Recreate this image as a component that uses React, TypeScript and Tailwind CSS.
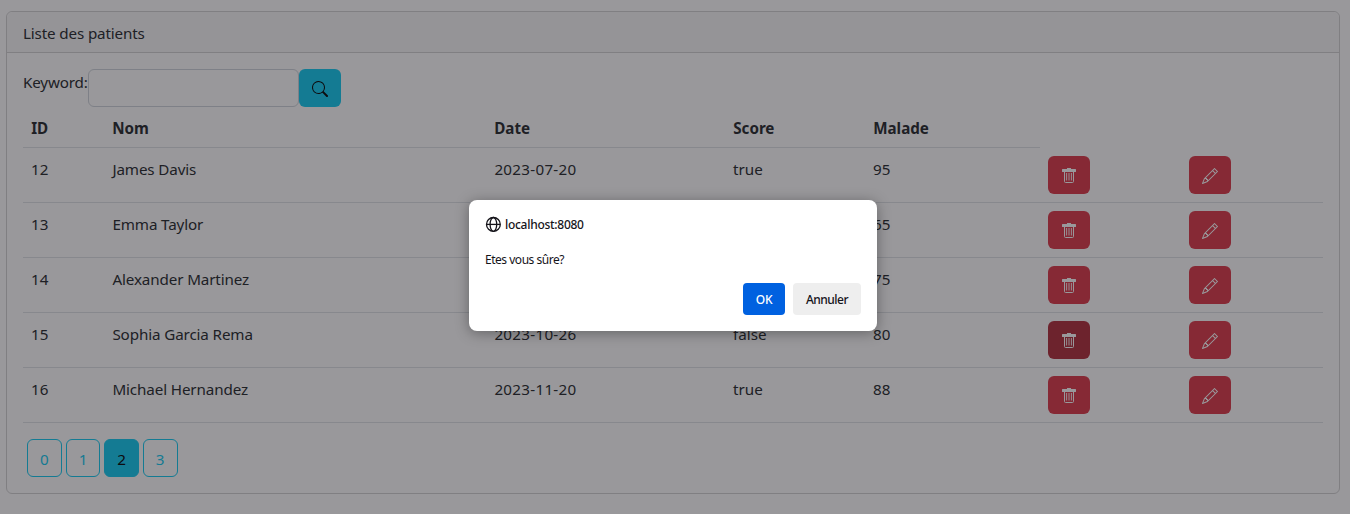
import { BsSearch, BsPencil } from "react-icons/bs";

type Patient = { id: number; nom: string; date: string; malade: string; score: number; pressed?: boolean };

const patients: Patient[] = [
  { id: 12, nom: "James Davis", date: "2023-07-20", malade: "true", score: 95 },
  { id: 13, nom: "Emma Taylor", date: "", malade: "", score: 65 },
  { id: 14, nom: "Alexander Martinez", date: "", malade: "", score: 75 },
  { id: 15, nom: "Sophia Garcia Rema", date: "2023-10-26", malade: "false", score: 80, pressed: true },
  { id: 16, nom: "Michael Hernandez", date: "2023-11-20", malade: "true", score: 88 },
];

const columns = "grid grid-cols-[81px_382px_239px_140px_175px_141px_142px]";

function TrashIcon() {
  return (
    <svg width="16" height="16" viewBox="0 0 16 16" fill="none" stroke="currentColor">
      <path d="M6 1h4v1h4.4a.6.6 0 0 1 .6.6V4.4a.6.6 0 0 1-.6.6H1.6a.6.6 0 0 1-.6-.6V2.6a.6.6 0 0 1 .6-.6H6z" fill="currentColor" stroke="none" />
      <path d="M3.5 5v9.5a1 1 0 0 0 1 1h7a1 1 0 0 0 1-1V5" />
      <path d="M5.6 6v7.5M8 6v7.5M10.4 6v7.5" strokeWidth="0.9" />
    </svg>
  );
}

function GlobeIcon() {
  return (
    <svg width="16" height="16" viewBox="0 0 16 16" fill="none" stroke="currentColor" strokeWidth="1.3">
      <circle cx="8.4" cy="8.4" r="6.9" />
      <ellipse cx="8.4" cy="8.4" rx="3.3" ry="6.9" />
      <path d="M1.6 8.4h13.6" />
    </svg>
  );
}

export default function App() {
  return (
    <div className="relative h-[514px] w-full overflow-hidden bg-white px-1.5 pt-[11px] font-['Noto_Sans',sans-serif] text-[15.2px] leading-6 text-[#212529]">
      <main className="mr-1 h-[483px] rounded-md border border-[#d2d2d2]">
        <header className="h-[41px] rounded-t-md border-b border-[#d2d2d2] bg-[#f8f8f8] px-4 pt-[9px]">
          <h1 className="tracking-[-0.14px]">Liste des patients</h1>
        </header>
        <div className="px-4 pt-4">
          <form className="flex h-[38px]">
            <label htmlFor="keyword" className="w-[65px] pt-px tracking-[-0.16px]">Keyword:</label>
            <input id="keyword" className="h-[38px] w-[211px] rounded-md border border-[#ced4da] bg-white" />
            <button type="button" aria-label="Search" className="flex h-[38px] w-[42px] items-center justify-center rounded-md bg-[#0dcaf0] pt-0.5 text-black">
              <BsSearch size={16} />
            </button>
          </form>
          <div className={`${columns} mt-0.5 h-[39px] pt-[7px] font-bold`}>
            {["ID", "Nom", "Date", "Score", "Malade"].map((name) => (
              <div key={name} className="h-8 border-b border-[#dee2e6] pl-[8.2px]">{name}</div>
            ))}
          </div>
          {patients.map((p) => (
            <div key={p.id} className={`${columns} h-[55px] border-b border-[#dee2e6] pt-[9px] [&>div]:px-2`}>
              <div>{p.id}</div>
              <div className="indent-[0.4px] tracking-[-0.12px]">{p.nom}</div>
              <div className="indent-[0.4px] tracking-[0.28px]">{p.date}</div>
              <div>{p.malade}</div>
              <div>{p.score}</div>
              <div className="-mt-px">
                <button aria-label="Delete" className={`flex h-[38px] w-[42px] items-center justify-center rounded-md text-white ${p.pressed ? "bg-[#b02a37]" : "bg-[#dc3545]"}`}>
                  <TrashIcon />
                </button>
              </div>
              <div className="-mt-px">
                <button aria-label="Edit" className="flex h-[38px] w-[42px] items-center justify-center rounded-md bg-[#dc3545] pt-0.5 text-white">
                  <BsPencil size={16} />
                </button>
              </div>
            </div>
          ))}
          <nav className="ml-1 mt-4 flex gap-[3.7px]">
            {[0, 1, 2, 3].map((n) => (
              <button key={n} className={`h-[38px] w-[34.9px] rounded-md border border-[#0dcaf0] pt-0.5 ${n === 2 ? "bg-[#0dcaf0] text-black" : "text-[#0dcaf0]"}`}>{n}</button>
            ))}
          </nav>
        </div>
      </main>

      <div className="absolute inset-0 bg-[rgba(28,27,34,0.45)]" />
      <section role="dialog" className="absolute left-[469px] top-[200px] h-[131px] w-[408px] rounded-lg bg-white px-4 pt-4 text-[12px] leading-4 text-[#15141a] shadow-[0_2px_14px_rgba(0,0,0,0.35)]">
        <div className="flex h-[18px] items-start gap-1 font-medium">
          <GlobeIcon />
          <span className="pt-px tracking-[-0.28px]">localhost:8080</span>
        </div>
        <p className="mt-[18px] tracking-[-0.48px]">Etes vous sûre?</p>
        <div className="mt-[15px] flex justify-end gap-2 font-medium">
          <button className="h-8 w-[42px] rounded bg-[#0061e0] pt-0.5 tracking-[-0.3px] text-white">OK</button>
          <button className="h-8 w-[68px] rounded bg-[#eeeeee] pt-0.5 tracking-[-0.5px]">Annuler</button>
        </div>
      </section>
    </div>
  );
}
